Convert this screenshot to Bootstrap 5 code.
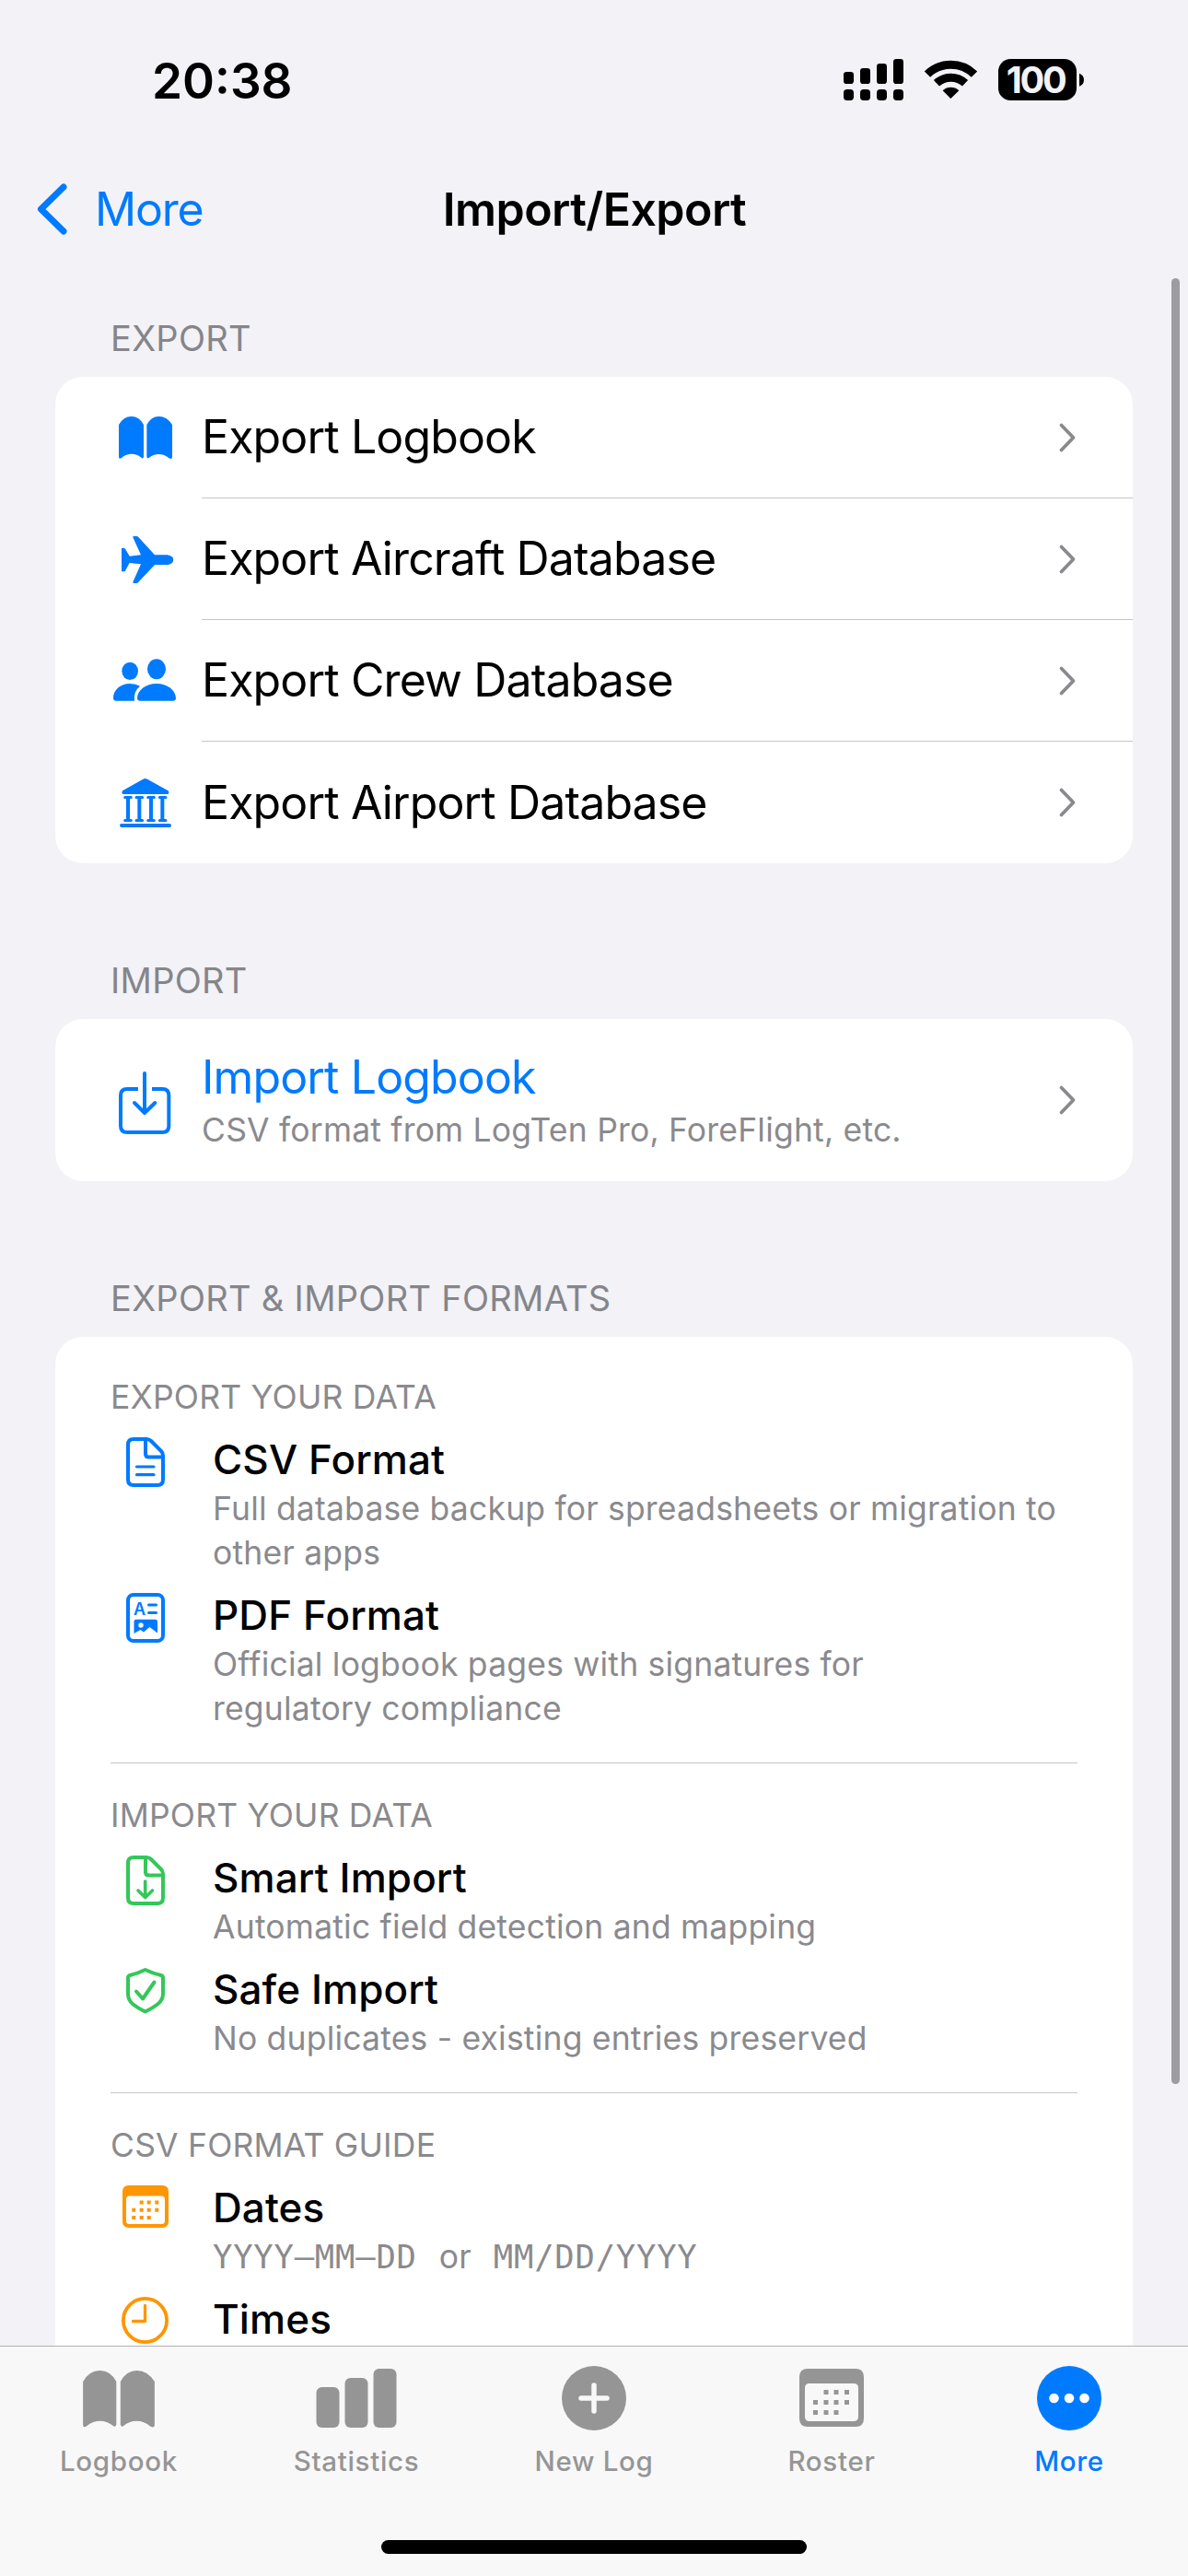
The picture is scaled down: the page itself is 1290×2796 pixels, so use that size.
<!DOCTYPE html>
<html lang="en">
<head>
<meta charset="utf-8">
<meta name="viewport" content="width=device-width, initial-scale=1">
<title>Import/Export</title>
<link href="https://cdn.jsdelivr.net/npm/bootstrap@5.3.0/dist/css/bootstrap.min.css" rel="stylesheet">
<style>
  body { background: #f2f2f7; color: #000; font-family: Inter, "Liberation Sans", sans-serif; }
  .app-screen { width: 1290px; height: 2796px; }
  .status-bar { height: 173px; padding: 0 109px 0 165px; }
  .status-bar svg { margin-bottom: 3px; }
  .status-time { font-size: 53px; font-weight: 600; line-height: 64px; padding-top: 2px; }
  .nav-head { height: 127px; padding: 21px 38px 0 39px; font-size: 50px; line-height: 66px; }
  .nav-side { width: 380px; }
  .nav-side a { color: #007aff; letter-spacing: -1.2px; gap: 29px; }
  .nav-title { font-size: 50px; line-height: 66px; font-weight: 600; letter-spacing: -.55px; }
  .scroll-area { flex: 1 1 0; min-height: 0; padding: 41px 60px 0; }
  .scroll-thumb { top: 2px; right: 9px; width: 9px; height: 1960px; border-radius: 5px; background: #9d9da1; }
  .group-label { height: 52px; line-height: 52px; margin: 0 0 16px 60px; font-size: 38px; letter-spacing: .3px; color: #85858a; font-weight: 400; }
  .group-card { border: 0; border-radius: 30px; background: #fff; margin-bottom: 101px; overflow: hidden; }
  .group-card .list-group-item { border: 0; height: 132px; padding: 0 0 0 50px; color: #000; background: transparent; font-size: 50px; letter-spacing: -.87px; gap: 9px; }
  .group-card .list-group-item.import-row { height: 176px; }
  .row-body { padding-right: 60px; border-bottom: 1px solid #c6c6c8; }
  .list-group-item:last-child .row-body { border-bottom: 0; }
  .row-icon { color: #007aff; flex: none; }
  .import-text { padding-top: 33px; }
  .import-title { line-height: 60px; color: #007aff; }
  .sub-text { font-size: 35.5px; line-height: 48px; letter-spacing: .2px; color: #8a8a8e; }
  .import-text .sub-text { margin-top: 4px; }
  .formats { padding: 42px 60px 0; }
  .formats hr { margin: 34px 0 33px; border-top: 1px solid #c6c6c8; opacity: 1; }
  .fmt-block { gap: 13px; }
  .fmt-item { height: 108px; gap: 31px; }
  .fmt-item.two-line { height: 156px; }
  .fmt-title { font-size: 44px; line-height: 60px; font-weight: 500; letter-spacing: .1px; }
  .sub-code { font-family: "DejaVu Sans Mono", "Liberation Mono", monospace; letter-spacing: .8px; }
  .tint-blue { color: #007aff; }
  .tint-green { color: #34c759; }
  .tint-orange { color: #ff9500; }
  .tab-bar { height: 250px; border-top: 1px solid #b0b0b3; background: #f8f8f8; }
  .tab-link { color: #959595; padding-top: 12px; font-size: 29.5px; font-weight: 500; line-height: 36px; letter-spacing: .7px; }
  .tab-link.active { color: #007aff; }
  .tab-link svg { margin-bottom: 4px; }
  .home-pill { width: 462px; height: 15px; border-radius: 8px; background: #000; margin-bottom: 24px; }
</style>
</head>
<body>
<svg width="0" height="0" class="d-none" aria-hidden="true">
  <symbol id="i-book" viewBox="57 64 174 141">
    <path d="M57 93Q72 66 98 66T138 93V198Q135 205 131 201C113 185 86 184 66 201Q57 207 57 197ZM231 93Q214 66 188 66T148 93V198Q151 205 155 201C173 185 201 184 221 202Q231 207 231 197Z"/>
  </symbol>
  <symbol id="i-chev" viewBox="0 0 22 34">
    <path d="M4.500 3.500L17.500 17L4.500 30.500" fill="none" stroke="currentColor" stroke-width="3.800" stroke-linecap="round" stroke-linejoin="round"/>
  </symbol>
  <symbol id="i-doc" viewBox="0 0 42 54">
    <path d="M8 2H22Q25 2 27 4L38 15Q40 17 40 20V46Q40 52 34 52H8Q2 52 2 46V8Q2 2 8 2ZM21 3V18Q21 21.500 24.500 21.500H39" fill="none" stroke="currentColor" stroke-width="4"/>
  </symbol>
</svg>

<div class="app-screen d-flex flex-column overflow-hidden position-relative">
  <div class="status-bar d-flex justify-content-between align-items-center flex-shrink-0">
    <div class="status-time">20:38</div>
    <svg width="265" height="70" viewBox="0 0 795 210" fill="#000">
      <g transform="translate(-48 0)">
        <rect x="48" y="84" width="33" height="39" rx="10"/><rect x="102" y="72" width="33" height="51" rx="10"/><rect x="156" y="57" width="33" height="66" rx="10"/><rect x="210" y="42" width="33" height="81" rx="10"/>
        <rect x="48" y="141" width="33" height="36" rx="11"/><rect x="102" y="141" width="33" height="36" rx="11"/><rect x="156" y="141" width="33" height="36" rx="11"/><rect x="210" y="141" width="33" height="36" rx="11"/>
        <path d="M321 92A109 109 0 0 1 474 92M351 121A68 68 0 0 1 444 121" fill="none" stroke="#000" stroke-width="27"/>
        <path d="M397 171L371 145A39 39 0 0 1 424 145Z"/>
        <rect x="552" y="42" width="255" height="135" rx="40"/>
        <path d="M816 89Q831 95 831 110T816 131Z"/>
        <text x="674" y="153" text-anchor="middle" font-size="119" font-weight="700" letter-spacing="-7" fill="#f2f2f7" font-family="Inter, sans-serif">100</text>
      </g>
    </svg>
  </div>

  <nav class="nav-head d-flex justify-content-between flex-shrink-0">
    <div class="nav-side">
      <a href="#" class="d-flex align-items-center text-decoration-none">
        <svg width="35" height="58" viewBox="0 0 35 58"><path d="M30 5L5.500 29L30 53" fill="none" stroke="currentColor" stroke-width="7" stroke-linecap="round" stroke-linejoin="round"/></svg>
        <span>More</span>
      </a>
    </div>
    <h1 class="nav-title m-0 text-center">Import/Export</h1>
    <div class="nav-side"></div>
  </nav>

  <main class="scroll-area overflow-hidden position-relative">
    <h2 class="group-label">EXPORT</h2>
    <div class="card group-card">
      <div class="list-group list-group-flush">
        <a href="#" class="list-group-item d-flex">
          <svg class="row-icon" width="100" height="132" viewBox="0 -63 300 396" fill="currentColor"><use href="#i-book" x="57" y="64" width="174" height="141"/></svg>
          <span class="row-body d-flex flex-grow-1 justify-content-between align-items-center">Export Logbook <svg width="22" height="34" color="#8a8a8e"><use href="#i-chev"/></svg></span>
        </a>
        <a href="#" class="list-group-item d-flex">
          <svg class="row-icon" width="100" height="132" viewBox="0 333 300 396" fill="currentColor"><path d="M66 495H74Q77 495 79 499L92 521L129 517L103 460Q102 456 106 456H115Q118 456 121 459L174 517H215Q234 520 235 533Q234 546 215 549H174L121 605Q118 609 115 609H106Q102 609 103 605L129 547L92 543L79 567Q77 571 74 571H66Z"/></svg>
          <span class="row-body d-flex flex-grow-1 justify-content-between align-items-center">Export Aircraft Database <svg width="22" height="34" color="#8a8a8e"><use href="#i-chev"/></svg></span>
        </a>
        <a href="#" class="list-group-item d-flex">
          <svg class="row-icon" width="100" height="132" viewBox="0 729 300 396" fill="currentColor"><ellipse cx="180" cy="889" rx="30" ry="33"/><ellipse cx="93.500" cy="895" rx="26.500" ry="29"/><path d="M117 983C118 957 145 936 180 936S242 957 243 983Q243 992 233 992H127Q117 992 117 983ZM39 983C39 957 62 936 93 936Q112 936 126 944Q104 962 108 992H49Q39 992 39 983Z"/></svg>
          <span class="row-body d-flex flex-grow-1 justify-content-between align-items-center">Export Crew Database <svg width="22" height="34" color="#8a8a8e"><use href="#i-chev"/></svg></span>
        </a>
        <a href="#" class="list-group-item d-flex">
          <svg class="row-icon" width="100" height="132" viewBox="0 1125 300 396" fill="currentColor">
            <path d="M69 1285L136 1247Q143 1243 150 1247L218 1285Q224 1296 214 1296H73Q64 1296 69 1285Z"/>
            <path d="M87 1306V1382M124 1306V1382M162 1306V1382M199 1306V1382" stroke="currentColor" stroke-width="12"/>
            <path d="M77 1306.500H97M114 1306.500H134M152 1306.500H172M190 1306.500H210M77 1381.500H97M114 1381.500H134M152 1381.500H172M190 1381.500H210" stroke="currentColor" stroke-width="9" stroke-linecap="round"/>
            <rect x="60" y="1392" width="168" height="12" rx="6"/>
          </svg>
          <span class="row-body d-flex flex-grow-1 justify-content-between align-items-center">Export Airport Database <svg width="22" height="34" color="#8a8a8e"><use href="#i-chev"/></svg></span>
        </a>
      </div>
    </div>

    <h2 class="group-label">IMPORT</h2>
    <div class="card group-card">
      <div class="list-group list-group-flush">
        <a href="#" class="list-group-item import-row d-flex">
          <svg class="row-icon" width="100" height="176" viewBox="0 -132 300 528" fill="none" stroke="currentColor" stroke-width="12"><path d="M120 96H84Q63 96 63 117V216Q63 237 84 237H199Q220 237 220 216V117Q220 96 199 96H165"/><path d="M141 45V174M108 141L141 174L175 141" stroke-linecap="round" stroke-linejoin="round"/></svg>
          <span class="row-body d-flex flex-grow-1 justify-content-between align-items-center">
            <span class="import-text d-flex flex-column align-self-start"><span class="import-title">Import Logbook</span><span class="sub-text">CSV format from LogTen Pro, ForeFlight, etc.</span></span>
            <svg width="22" height="34" color="#8a8a8e"><use href="#i-chev"/></svg>
          </span>
        </a>
      </div>
    </div>

    <h2 class="group-label">EXPORT &amp; IMPORT FORMATS</h2>
    <div class="card group-card formats">
      <section class="fmt-block d-flex flex-column">
        <div class="sub-text">EXPORT YOUR DATA</div>
        <div class="fmt-item two-line d-flex">
          <svg class="tint-blue flex-shrink-0" width="80" height="66"><use href="#i-doc" x="17" y="6" width="42" height="54"/><path d="M28.500 38H47M28.500 46.700H47" stroke="currentColor" stroke-width="3.200" stroke-linecap="round"/></svg>
          <div><div class="fmt-title">CSV Format</div><div class="sub-text">Full database backup for spreadsheets or migration to<br>other apps</div></div>
        </div>
        <div class="fmt-item two-line d-flex">
          <svg class="tint-blue flex-shrink-0" width="80" height="66"><rect x="19" y="8" width="38" height="50" rx="6" fill="none" stroke="currentColor" stroke-width="4"/><text x="25" y="30" font-size="18" font-weight="600" fill="currentColor" font-family="Inter, sans-serif">A</text><path d="M41.500 19H49.500M41.500 27.500H49.500" stroke="currentColor" stroke-width="3" stroke-linecap="round"/><path d="M25.500 37Q25.500 34.700 28 34.700H48.500Q51 34.700 51 37V49.500L42.500 43L36 48.500L32.500 46L25.500 50Z" fill="currentColor"/><circle cx="33" cy="41" r="2.700" fill="#fff"/></svg>
          <div><div class="fmt-title">PDF Format</div><div class="sub-text">Official logbook pages with signatures for<br>regulatory compliance</div></div>
        </div>
      </section>
      <hr>
      <section class="fmt-block d-flex flex-column">
        <div class="sub-text">IMPORT YOUR DATA</div>
        <div class="fmt-item d-flex">
          <svg class="tint-green flex-shrink-0" width="80" height="66"><use href="#i-doc" x="17" y="6" width="42" height="54"/><path d="M37.700 34V51.500M30 44L37.700 51.500L45.500 44" fill="none" stroke="currentColor" stroke-width="3.600" stroke-linecap="round" stroke-linejoin="round"/></svg>
          <div><div class="fmt-title">Smart Import</div><div class="sub-text">Automatic field detection and mapping</div></div>
        </div>
        <div class="fmt-item d-flex">
          <svg class="tint-green flex-shrink-0" width="80" height="66" fill="none" stroke="currentColor" stroke-width="4" stroke-linecap="round" stroke-linejoin="round"><path d="M37.700 9Q46 13 55 15Q57 15.500 57 18V35Q57 42 51 46.500Q46 50.500 37.700 54.500Q29.500 50.500 24.500 46.500Q19 42 19 35V18Q19 15.500 21 15Q29.500 13 37.700 9Z"/><path d="M28 32.500L35 40.500L47.500 22.500"/></svg>
          <div><div class="fmt-title">Safe Import</div><div class="sub-text">No duplicates - existing entries preserved</div></div>
        </div>
      </section>
      <hr>
      <section class="fmt-block d-flex flex-column">
        <div class="sub-text">CSV FORMAT GUIDE</div>
        <div class="fmt-item d-flex">
          <svg class="tint-orange flex-shrink-0" width="80" height="66" fill="currentColor"><path fill-rule="evenodd" d="M20 6H56Q63 6 63 13V45Q63 52 56 52H20Q13 52 13 45V13Q13 6 20 6ZM20.500 17.500Q17 17.500 17 21V44.500Q17 48 20.500 48H55.500Q59 48 59 44.500V21Q59 17.500 55.500 17.500Z"/><path d="M31.700 24.400h4M39.700 24.400h4M48.300 24.400h4M23.300 32.700h4M31.700 32.700h4M39.700 32.700h4M48.300 32.700h4M23.300 41h4M31.700 41h4M39.700 41h4" stroke="currentColor" stroke-width="4"/></svg>
          <div><div class="fmt-title">Dates</div><div class="sub-text"><span class="sub-code">YYYY–MM–DD</span><span class="mx-4">or</span><span class="sub-code">MM/DD/YYYY</span></div></div>
        </div>
        <div class="fmt-item d-flex">
          <svg class="tint-orange flex-shrink-0" width="80" height="58" fill="none" stroke="currentColor" stroke-width="3.800"><circle cx="37.500" cy="31.500" r="23.600"/><path d="M37.500 15.500V32.500H24.500" stroke-width="3.300" stroke-linecap="round" stroke-linejoin="round"/></svg>
          <div class="fmt-title">Times</div>
        </div>
      </section>
    </div>
    <div class="scroll-thumb position-absolute"></div>
  </main>

  <footer class="tab-bar d-flex flex-column justify-content-between align-items-center flex-shrink-0">
    <nav class="d-flex w-100">
      <a href="#" class="tab-link col d-flex flex-column align-items-center text-decoration-none">
        <svg width="80" height="90" fill="currentColor"><use href="#i-book" x="0.500" y="13" width="79" height="63"/></svg>Logbook</a>
      <a href="#" class="tab-link col d-flex flex-column align-items-center text-decoration-none">
        <svg width="88" height="90" fill="currentColor"><rect x="0.500" y="32" width="25" height="44" rx="6"/><rect x="31.500" y="22" width="25" height="54" rx="6"/><rect x="62.500" y="12" width="25" height="64" rx="6"/></svg>Statistics</a>
      <a href="#" class="tab-link col d-flex flex-column align-items-center text-decoration-none">
        <svg width="80" height="90"><circle cx="40" cy="44" r="35" fill="currentColor"/><path d="M40 30V58M26 44H54" stroke="#f8f8f8" stroke-width="5.500" stroke-linecap="round"/></svg>New Log</a>
      <a href="#" class="tab-link col d-flex flex-column align-items-center text-decoration-none">
        <svg width="80" height="90" fill="currentColor"><path fill-rule="evenodd" d="M14 12H66Q75 12 75 21V66Q75 75 66 75H14Q5 75 5 66V21Q5 12 14 12ZM16 28Q11 28 11 33V64Q11 69 16 69H64Q69 69 69 64V33Q69 28 64 28Z"/><path d="M31.500 37.500h5M42.500 37.500h5M54 37.500h5M20 48.500h5M31.500 48.500h5M42.500 48.500h5M54 48.500h5M20 59.500h5M31.500 59.500h5M42.500 59.500h5" stroke="currentColor" stroke-width="5"/></svg>Roster</a>
      <a href="#" class="tab-link active col d-flex flex-column align-items-center text-decoration-none">
        <svg width="80" height="90"><circle cx="40" cy="44" r="35" fill="currentColor"/><circle cx="23.500" cy="44" r="5.300" fill="#fff"/><circle cx="40" cy="44" r="5.300" fill="#fff"/><circle cx="56.500" cy="44" r="5.300" fill="#fff"/></svg>More</a>
    </nav>
    <div class="home-pill"></div>
  </footer>
</div>
<script src="https://cdn.jsdelivr.net/npm/bootstrap@5.3.0/dist/js/bootstrap.bundle.min.js"></script>
</body>
</html>
